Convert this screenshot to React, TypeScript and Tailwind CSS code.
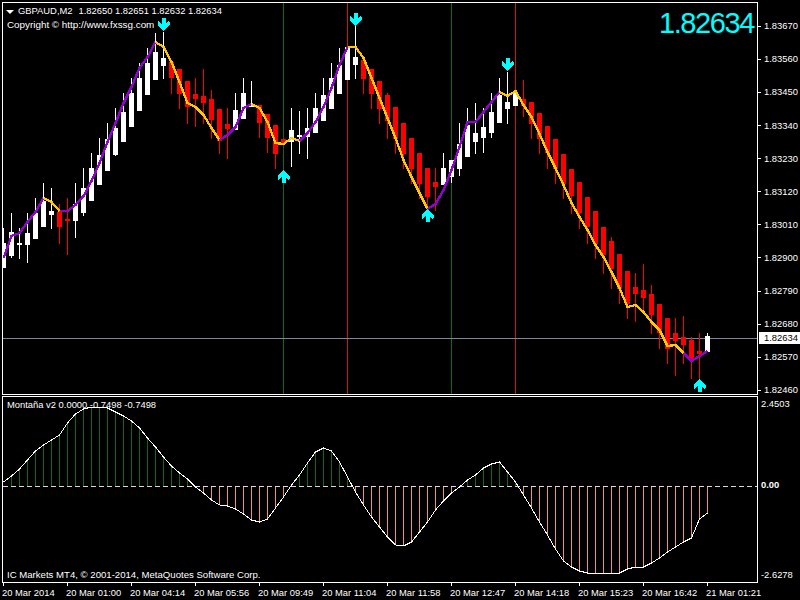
const CANDLES: [number, number, number, number, 'w' | 'r'][] = [
  [243, 268, 228, 268, 'w'], [232, 256, 213, 258, 'w'], [243, 245, 228, 259, 'w'], [233, 245, 213, 263, 'w'],
  [213, 239, 198, 239, 'w'], [201, 227, 183, 227, 'w'], [211, 215, 188, 229, 'w'], [212, 227, 204, 244, 'r'],
  [219, 221, 198, 255, 'r'], [204, 221, 183, 238, 'w'], [188, 213, 168, 216, 'w'], [168, 201, 153, 201, 'w'],
  [155, 185, 138, 185, 'w'], [139, 171, 123, 171, 'w'], [128, 155, 108, 156, 'w'], [112, 142, 93, 142, 'w'],
  [93, 127, 78, 127, 'w'], [78, 111, 63, 111, 'w'], [63, 95, 48, 95, 'w'], [52, 80, 33, 80, 'w'],
  [58, 66, 32, 79, 'w'], [62, 78, 62, 94, 'r'], [69, 94, 69, 109, 'r'], [81, 107, 81, 124, 'r'],
  [94, 99, 78, 127, 'r'], [96, 103, 69, 124, 'r'], [99, 120, 90, 139, 'r'], [109, 141, 109, 154, 'r'],
  [124, 129, 108, 159, 'r'], [110, 130, 93, 130, 'w'], [93, 119, 78, 119, 'w'], [105, 107, 81, 107, 'w'],
  [105, 123, 105, 138, 'r'], [114, 138, 114, 153, 'r'], [125, 154, 125, 169, 'r'], [139, 144, 139, 145, 'r'],
  [130, 142, 108, 167, 'w'], [135, 137, 111, 154, 'w'], [128, 137, 108, 159, 'w'], [108, 133, 93, 133, 'w'],
  [95, 121, 78, 121, 'w'], [78, 109, 63, 109, 'w'], [65, 94, 48, 94, 'w'], [47, 80, 47, 80, 'w'],
  [57, 65, 26, 79, 'w'], [60, 79, 60, 94, 'r'], [69, 94, 69, 109, 'r'], [81, 109, 81, 124, 'r'],
  [95, 121, 93, 139, 'r'], [107, 139, 107, 154, 'r'], [123, 154, 123, 169, 'r'], [138, 169, 138, 184, 'r'],
  [153, 184, 153, 199, 'r'], [168, 197, 168, 212, 'r'], [182, 187, 168, 211, 'r'], [168, 185, 153, 185, 'w'],
  [160, 177, 160, 183, 'w'], [144, 169, 123, 176, 'w'], [125, 157, 108, 157, 'w'], [133, 142, 103, 154, 'w'],
  [127, 138, 108, 153, 'w'], [112, 133, 93, 138, 'w'], [95, 123, 78, 123, 'w'], [102, 109, 72, 124, 'w'],
  [93, 106, 90, 106, 'w'], [99, 106, 80, 117, 'r'], [102, 124, 102, 139, 'r'], [113, 139, 113, 154, 'r'],
  [126, 153, 126, 169, 'r'], [139, 169, 139, 184, 'r'], [154, 184, 154, 199, 'r'], [169, 196, 169, 214, 'r'],
  [182, 213, 182, 229, 'r'], [197, 227, 197, 244, 'r'], [211, 244, 211, 259, 'r'], [227, 255, 227, 274, 'r'],
  [241, 269, 237, 289, 'r'], [254, 289, 254, 304, 'r'], [271, 304, 271, 319, 'r'], [287, 294, 273, 322, 'r'],
  [290, 298, 264, 310, 'r'], [294, 315, 285, 334, 'r'], [304, 333, 304, 349, 'r'], [318, 349, 318, 364, 'r'],
  [333, 341, 318, 376, 'r'], [337, 345, 316, 364, 'r'], [340, 360, 337, 379, 'r'], [351, 354, 333, 379, 'r'],
  [336, 352, 333, 352, 'w'],
];

const TREND = [
  258, 236, 233, 222, 212, 198, 202, 211, 211, 205, 196, 181, 163, 142, 123, 103, 87, 68, 57, 42, 47, 62, 82, 103,
  107, 115, 128, 140, 135, 127, 108, 104, 108, 122, 143, 144, 138, 141, 133, 122, 107, 88, 65, 47, 47, 58, 78, 98,
  118, 138, 160, 177, 193, 209, 204, 190, 170, 147, 122, 122, 112, 102, 92, 96, 91, 105, 117, 134, 152, 168, 185,
  203, 217, 230, 245, 257, 272, 288, 307, 305, 312, 322, 330, 346, 345, 353, 361, 356, 351,
];

const OSC = [
  482, 476, 469, 460, 451, 445, 440, 435, 423, 414, 409, 407, 407, 408, 412, 416, 421, 428, 438, 447, 457, 466, 473,
  479, 487, 493, 500, 505, 506, 509, 514, 520, 522, 519, 508, 497, 485, 475, 463, 452, 448, 451, 462, 477, 492, 505,
  517, 527, 537, 545, 546, 542, 532, 522, 510, 501, 493, 487, 480, 475, 468, 464, 462, 472, 482, 495, 508, 522, 535,
  549, 561, 567, 571, 573, 573, 573, 573, 573, 569, 567, 567, 563, 558, 552, 547, 542, 538, 519, 513,
];

const GOLD_RUNS = [[5, 7], [19, 27], [31, 37], [43, 53], [62, 85]];
const X = (i: number) => 3 + i * 8;

function trendRuns() {
  const runs: { pts: string; color: string }[] = [];
  const edges = [0];
  GOLD_RUNS.forEach(([a, b]) => edges.push(a, b));
  edges.push(TREND.length - 1);
  for (let e = 0; e < edges.length - 1; e++) {
    const pts = [];
    for (let i = edges[e]; i <= edges[e + 1]; i++) pts.push(`${X(i) + 0.5},${TREND[i]}`);
    runs.push({ pts: pts.join(' '), color: e % 2 === 0 ? '#9400d3' : '#ffc800' });
  }
  return runs;
}

function Arrow({ c, y, up }: { c: number; y: number; up?: boolean }) {
  const s = up ? -1 : 1;
  const cx = c + 0.5;
  const pts = [
    [cx - 2, y], [cx + 2, y], [cx + 2, y + s * 6], [cx + 5, y + s * 3], [cx + 6, y + s * 4], [cx + 6, y + s * 7],
    [cx, y + s * 13], [cx - 6, y + s * 7], [cx - 6, y + s * 4], [cx - 5, y + s * 3], [cx - 2, y + s * 6],
  ];
  return <polygon points={pts.map((p) => p.join(',')).join(' ')} fill="#00ffff" />;
}

const PRICES = ['1.83670', '1.83560', '1.83450', '1.83340', '1.83230', '1.83120', '1.83010', '1.82900', '1.82790', '1.82680', '1.82570', '1.82460'];
const TIMES = ['20 Mar 2014', '20 Mar 01:00', '20 Mar 04:14', '20 Mar 05:56', '20 Mar 09:49', '20 Mar 11:04', '20 Mar 11:58', '20 Mar 12:47', '20 Mar 14:18', '20 Mar 15:23', '20 Mar 16:42', '21 Mar 01:21'];

export default function App() {
  return (
    <div className="w-[800px] h-[600px] bg-black text-white overflow-hidden flex flex-col pt-[2px] pl-[2px] text-[9.4px] leading-[12px] font-['Liberation_Sans',Arial,sans-serif] whitespace-nowrap">
      <div className="flex h-[393px]">
        <div className="relative w-[756px] h-[393px] border border-white shrink-0">
          <svg width="754" height="391" viewBox="3 3 754 391" shapeRendering="crispEdges" className="block">
            {[[283, '#0b6b0b'], [347, '#d01414'], [451, '#0b6b0b'], [515, '#d01414']].map(([x, col]) => (
              <rect key={x as number} x={x as number} y="3" width="1" height="391" fill={col as string} />
            ))}
            <rect x="3" y="338" width="754" height="1" fill="#778899" />
            {CANDLES.map(([t, b, h, l, k], i) => {
              const x = X(i);
              const col = k === 'w' ? '#ffffff' : '#ff0000';
              return (
                <g key={i} fill={col}>
                  <rect x={x} y={h} width="1" height={l - h} />
                  <rect x={x - 2} y={t} width="5" height={b - t} />
                </g>
              );
            })}
            {trendRuns().map((r, i) => (
              <polyline key={i} points={r.pts} fill="none" stroke={r.color} strokeWidth="2.3" />
            ))}
            <Arrow c={163} y={18} />
            <Arrow c={355} y={13} />
            <Arrow c={507} y={58} />
            <Arrow c={283} y={183} up />
            <Arrow c={427} y={222} up />
            <Arrow c={699} y={392} up />
          </svg>
          <div className="absolute left-[3px] top-[2px] flex items-center h-[12px]">
            <span className="w-0 h-0 border-l-[4px] border-r-[4px] border-t-[4px] border-l-transparent border-r-transparent border-t-white mt-[1px]" />
            <span className="ml-[4px]">GBPAUD,M2</span>
            <span className="ml-[6px]">1.82650 1.82651 1.82632 1.82634</span>
          </div>
          <div className="absolute left-[4px] top-[16px] text-[9.85px]">Copyright © http://www.fxssg.com</div>
          <div className="absolute right-[3px] top-[3px] text-[29px] leading-[34px] tracking-[-1.4px] text-[#00ffff]">1.82634</div>
        </div>
        <div className="relative flex-1 flex flex-col pt-[7.75px]">
          {PRICES.map((p) => (
            <div key={p} className="h-[33.1px] shrink-0 flex items-center">
              <span className="w-[3px] h-px bg-white" />
              <span className="ml-[3px]">{p}</span>
            </div>
          ))}
          <div className="absolute left-[1px] top-[330px] w-[41px] h-[12px] bg-white text-black pl-[5px]">1.82634</div>
        </div>
      </div>
      <div className="flex h-[187px] mt-px">
        <div className="relative w-[756px] h-[187px] border border-white shrink-0">
          <svg width="754" height="185" viewBox="3 397 754 185" shapeRendering="crispEdges" className="block">
            {OSC.map((y, i) => {
              if (i === 0 || Math.abs(y - 486) <= 2) return null;
              return (
                <rect key={i} x={X(i)} y={Math.min(y, 486)} width="1" height={Math.abs(y - 486)} fill={y < 486 ? '#0e6a0e' : '#f0a020'} />
              );
            })}
            <line x1="3" y1="486.5" x2="757" y2="486.5" stroke="#d8d8d8" strokeWidth="1" strokeDasharray="5 3" />
            <polyline points={OSC.map((y, i) => `${X(i) + 0.5},${y}`).join(' ')} fill="none" stroke="#ffffff" strokeWidth="1" />
          </svg>
          <div className="absolute left-[4px] top-[2px]">Montaña v2 0.0000 -0.7498 -0.7498</div>
          <div className="absolute left-[4px] bottom-[1px] text-[9.6px]">IC Markets MT4, © 2001-2014, MetaQuotes Software Corp.</div>
        </div>
        <div className="flex-1 flex flex-col pt-[2px] pl-[3px]">
          <div className="h-[12px]">2.4503</div>
          <div className="h-[12px] mt-[69px] font-bold">0.00</div>
          <div className="h-[12px] mt-[78px]">-2.6278</div>
        </div>
      </div>
      <div className="flex pl-px">
        {TIMES.map((t) => (
          <div key={t} className="w-[64px] shrink-0 flex flex-col">
            <span className="block w-px h-[3px] bg-white" />
            <span className="-ml-px mt-[1px]">{t}</span>
          </div>
        ))}
      </div>
    </div>
  );
}
